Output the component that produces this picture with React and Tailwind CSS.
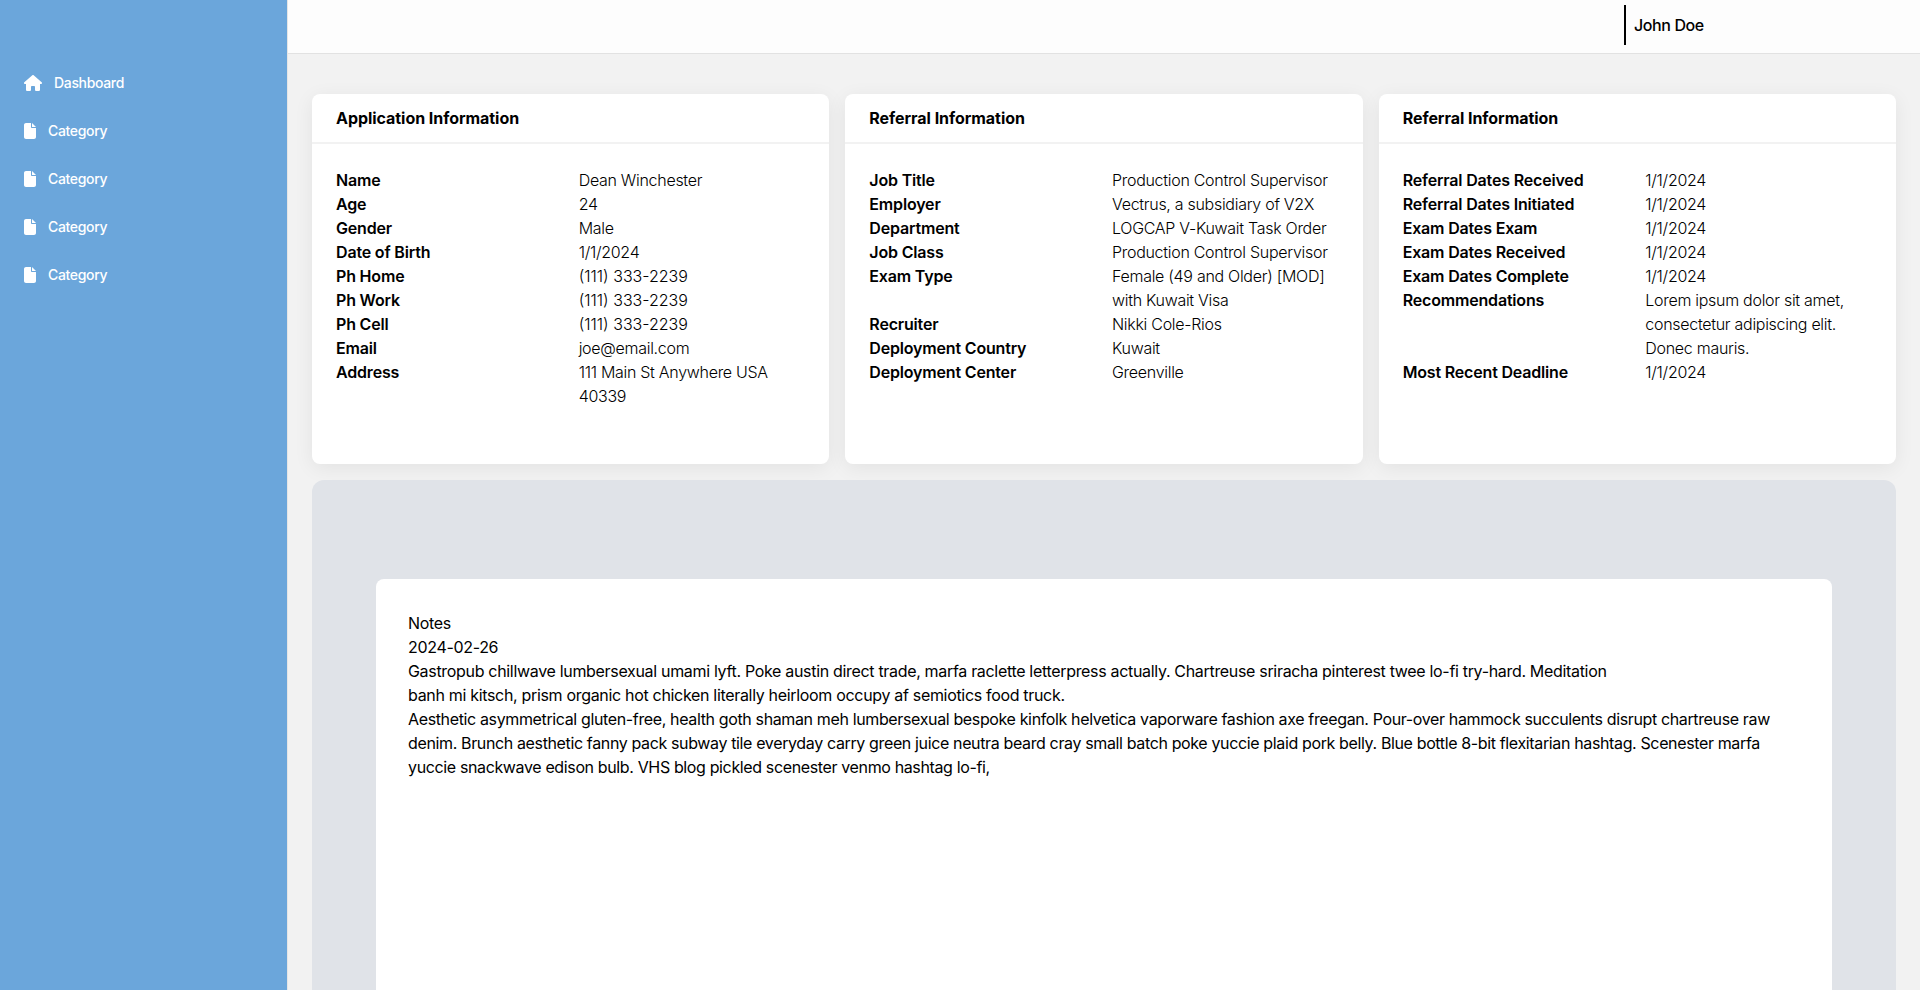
import { FaHouse, FaFile } from "react-icons/fa6";

const navItems = [
  { label: "Dashboard", home: true },
  { label: "Category" },
  { label: "Category" },
  { label: "Category" },
  { label: "Category" },
];

const cards = [
  {
    title: "Application Information",
    rows: [
      ["Name", "Dean Winchester"],
      ["Age", "24"],
      ["Gender", "Male"],
      ["Date of Birth", "1/1/2024"],
      ["Ph Home", "(111) 333-2239"],
      ["Ph Work", "(111) 333-2239"],
      ["Ph Cell", "(111) 333-2239"],
      ["Email", "joe@email.com"],
      ["Address", "111 Main St Anywhere USA 40339"],
    ],
  },
  {
    title: "Referral Information",
    rows: [
      ["Job Title", "Production Control Supervisor"],
      ["Employer", "Vectrus, a subsidiary of V2X"],
      ["Department", "LOGCAP V-Kuwait Task Order"],
      ["Job Class", "Production Control Supervisor"],
      ["Exam Type", "Female (49 and Older) [MOD] with Kuwait Visa"],
      ["Recruiter", "Nikki Cole-Rios"],
      ["Deployment Country", "Kuwait"],
      ["Deployment Center", "Greenville"],
    ],
  },
  {
    title: "Referral Information",
    rows: [
      ["Referral Dates Received", "1/1/2024"],
      ["Referral Dates Initiated", "1/1/2024"],
      ["Exam Dates Exam", "1/1/2024"],
      ["Exam Dates Received", "1/1/2024"],
      ["Exam Dates Complete", "1/1/2024"],
      ["Recommendations", "Lorem ipsum dolor sit amet, consectetur adipiscing elit. Donec mauris."],
      ["Most Recent Deadline", "1/1/2024"],
    ],
  },
];

const firstNote = [
  "Notes",
  "2024-02-26",
  "Gastropub chillwave lumbersexual umami lyft. Poke austin direct trade, marfa raclette letterpress actually. Chartreuse sriracha pinterest twee lo-fi try-hard. Meditation",
  "banh mi kitsch, prism organic hot chicken literally heirloom occupy af semiotics food truck.",
];

const secondNote = [
  "Aesthetic asymmetrical gluten-free, health goth shaman meh lumbersexual bespoke kinfolk helvetica vaporware fashion axe freegan. Pour-over hammock succulents disrupt chartreuse raw",
  "denim. Brunch aesthetic fanny pack subway tile everyday carry green juice neutra beard cray small batch poke yuccie plaid pork belly. Blue bottle 8-bit flexitarian hashtag. Scenester marfa",
  "yuccie snackwave edison bulb. VHS blog pickled scenester venmo hashtag lo-fi,",
];

function Sidebar() {
  return (
    <aside className="w-72 shrink-0 border-r border-[#e5e5e5] bg-[#6ba6db] pt-[59px] text-white">
      <nav className="flex flex-col">
        {navItems.map((item, i) => (
          <a key={i} className="flex h-12 items-center gap-3 pl-6 text-sm font-medium tracking-[-0.024em]">
            {item.home ? <FaHouse className="h-4 w-[18px]" /> : <FaFile className="h-4 w-3" />}
            <span>{item.label}</span>
          </a>
        ))}
      </nav>
    </aside>
  );
}

function InfoCard({ title, rows }) {
  return (
    <section className="h-[370px] rounded-lg bg-white shadow-[0_4px_20px_rgba(0,0,0,0.065)]">
      <h2 className="flex h-[50px] items-center border-b-2 border-[#f2f2f2] px-6 font-bold tracking-[-0.003em]">
        {title}
      </h2>
      <dl className="p-6">
        {rows.map(([label, value]) => (
          <div key={label} className="grid grid-cols-2 gap-4">
            <dt className="font-semibold whitespace-nowrap tracking-[-0.011em]">{label}</dt>
            {value.startsWith("(") ? (
              <dd className="font-light tracking-[0em]">{value}</dd>
            ) : (
              <dd className="font-light tracking-[-0.018em]">{value}</dd>
            )}
          </div>
        ))}
      </dl>
    </section>
  );
}

export default function App() {
  return (
    <div className="flex h-[990px] overflow-hidden bg-[#f2f2f2] font-['Inter',sans-serif] text-base text-black">
      <Sidebar />
      <div className="flex min-w-0 flex-1 flex-col">
        <header className="flex h-[54px] shrink-0 border-b border-[#e2e2e2] bg-[#fdfdfd] pt-[5px] pl-[1336px]">
          <div className="flex h-10 items-center border-l-2 border-black pl-2 font-medium whitespace-nowrap tracking-[-0.025em]">
            John Doe
          </div>
        </header>
        <main className="flex min-h-0 flex-1 flex-col gap-4 px-6 pt-10">
          <div className="grid shrink-0 grid-cols-3 gap-4">
            {cards.map((card, i) => (
              <InfoCard key={i} {...card} />
            ))}
          </div>
          <div className="relative flex flex-1 flex-col rounded-t-xl bg-[#e0e3e8] px-16 pt-[99px]">
            <article className="flex-1 rounded-t-lg bg-white p-8 whitespace-nowrap">
              <div className="tracking-[-0.02em]">
                {firstNote.map((line) => (
                  <p key={line}>{line}</p>
                ))}
              </div>
              <div className="tracking-[-0.0228em]">
                {secondNote.map((line) => (
                  <p key={line}>{line}</p>
                ))}
              </div>
            </article>
          </div>
        </main>
      </div>
    </div>
  );
}
